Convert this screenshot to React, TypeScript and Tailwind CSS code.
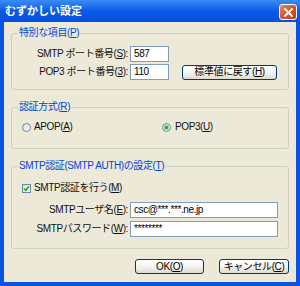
import React from "react";

function Mn({ k }: { k: string }) {
  return <span className="underline underline-offset-1">{k}</span>;
}

function XpButton({ children, className }: { children: React.ReactNode; className?: string }) {
  return (
    <div
      className={
        "h-[15px] flex items-center justify-center rounded-[3px] border border-[#003C74] bg-linear-to-b from-white via-[#F4F4F0] to-[#DCDBD3] text-[10px] leading-none text-black " +
        (className ?? "")
      }
    >
      {children}
    </div>
  );
}

function TextBox({ value, className }: { value: string; className?: string }) {
  return (
    <div
      className={
        "h-[16px] flex items-center border border-[#7F9DB9] bg-white pl-[3px] text-[10px] leading-none text-black " +
        (className ?? "")
      }
    >
      {value}
    </div>
  );
}

function Radio({ checked }: { checked?: boolean }) {
  return (
    <div className="w-[9px] h-[9px] rounded-full border border-[#6F84A0] bg-linear-to-br from-[#DCDCD6] to-white flex items-center justify-center">
      {checked && <div className="w-[3px] h-[3px] rounded-full bg-[#21A121] shadow-[0_0_1px_1px_#7ED07E]" />}
    </div>
  );
}

function Group({ title, children, className }: { title: React.ReactNode; children: React.ReactNode; className?: string }) {
  return (
    <fieldset className={"border border-[#D0D0BF] rounded-[3px] " + (className ?? "")}>
      <legend className="ml-[6px] px-[1px] text-[10px] leading-[12px] text-[#0046D5]">{title}</legend>
      {children}
    </fieldset>
  );
}

export default function App() {
  return (
    <div className="w-[300px] h-[286px] flex flex-col font-['Liberation_Sans','Noto_Sans_CJK_JP',sans-serif] text-[10px] tracking-[-0.4px] text-[#111] select-none">
      {/* title bar */}
      <div className="h-[22px] flex items-start pl-[5px] pr-[3px] bg-linear-to-b from-[#3A8CF6] via-[#0A5BE8] to-[#0550DD]">
        <span className="mt-[5px] text-white font-bold text-[11px] leading-[12px] tracking-normal">むずかしい設定</span>
        <div className="ml-auto mt-[4px] w-[18px] h-[16px] rounded-[3px] border border-white bg-linear-to-br from-[#E8886A] via-[#D9542E] to-[#C0391A] flex items-center justify-center">
          <svg width="9" height="9" viewBox="0 0 9 9">
            <path d="M1 1 L8 8 M8 1 L1 8" stroke="white" strokeWidth="2" strokeLinecap="square" />
          </svg>
        </div>
      </div>

      {/* frame */}
      <div className="flex-1 flex bg-[#0A53E3] px-[4px] pb-[4px]">
        <div className="flex-1 flex flex-col bg-[#ECE9D8] px-[7px] pt-[5px]">
          <Group title={<>特別な項目(<Mn k="P" />)</>} className="pb-[9px]">
            <div className="mt-[7px] flex items-center">
              <div className="w-[116px] text-right leading-[12px]">
                SMTP ポート番号(<Mn k="S" />):
              </div>
              <TextBox value="587" className="ml-[2px] w-[39px]" />
            </div>
            <div className="mt-[2px] flex items-center">
              <div className="w-[116px] text-right leading-[12px]">
                POP3 ポート番号(<Mn k="3" />):
              </div>
              <TextBox value="110" className="ml-[2px] w-[39px]" />
              <XpButton className="ml-[13px] w-[95px]">
                標準値に戻す(<Mn k="H" />)
              </XpButton>
            </div>
          </Group>

          <Group title={<>認証方式(<Mn k="R" />)</>} className="mt-[11px] pb-[15px]">
            <div className="mt-[8px] h-[12px] flex items-center pl-[10px]">
              <div className="w-[140px] flex items-center">
                <Radio />
                <span className="ml-[3px] leading-[12px]">
                  APOP(<Mn k="A" />)
                </span>
              </div>
              <div className="flex items-center">
                <Radio checked />
                <span className="ml-[4px] leading-[12px]">
                  POP3(<Mn k="U" />)
                </span>
              </div>
            </div>
          </Group>

          <Group title={<>SMTP認証(SMTP AUTH)の設定(<Mn k="T" />)</>} className="mt-[11px] pb-[11px]">
            <div className="mt-[10px] h-[12px] flex items-center pl-[10px]">
              <div className="w-[9px] h-[9px] border border-[#6F84A0] bg-linear-to-br from-[#DCDCD6] to-white flex items-center justify-center">
                <svg width="7" height="7" viewBox="0 0 7 7">
                  <path d="M1 3.5 L2.8 5.3 L6 1.5" stroke="#21A121" strokeWidth="1.6" fill="none" />
                </svg>
              </div>
              <span className="ml-[3px] leading-[12px]">
                SMTP認証を行う(<Mn k="M" />)
              </span>
            </div>
            <div className="mt-[8px] flex items-center">
              <div className="w-[116px] text-right leading-[12px]">
                SMTPユーザ名(<Mn k="E" />):
              </div>
              <TextBox value="csc@***.***.ne.jp" className="ml-[2px] w-[148px]" />
            </div>
            <div className="mt-[3px] flex items-center">
              <div className="w-[116px] text-right leading-[12px]">
                SMTPパスワード(<Mn k="W" />):
              </div>
              <TextBox value="********" className="ml-[2px] w-[148px]" />
            </div>
          </Group>

          <div className="mt-[10px] flex justify-end gap-[15px]">
            <XpButton className="w-[69px]">
              OK(<Mn k="O" />)
            </XpButton>
            <XpButton className="w-[70px]">
              キャンセル(<Mn k="C" />)
            </XpButton>
          </div>
        </div>
      </div>
    </div>
  );
}
